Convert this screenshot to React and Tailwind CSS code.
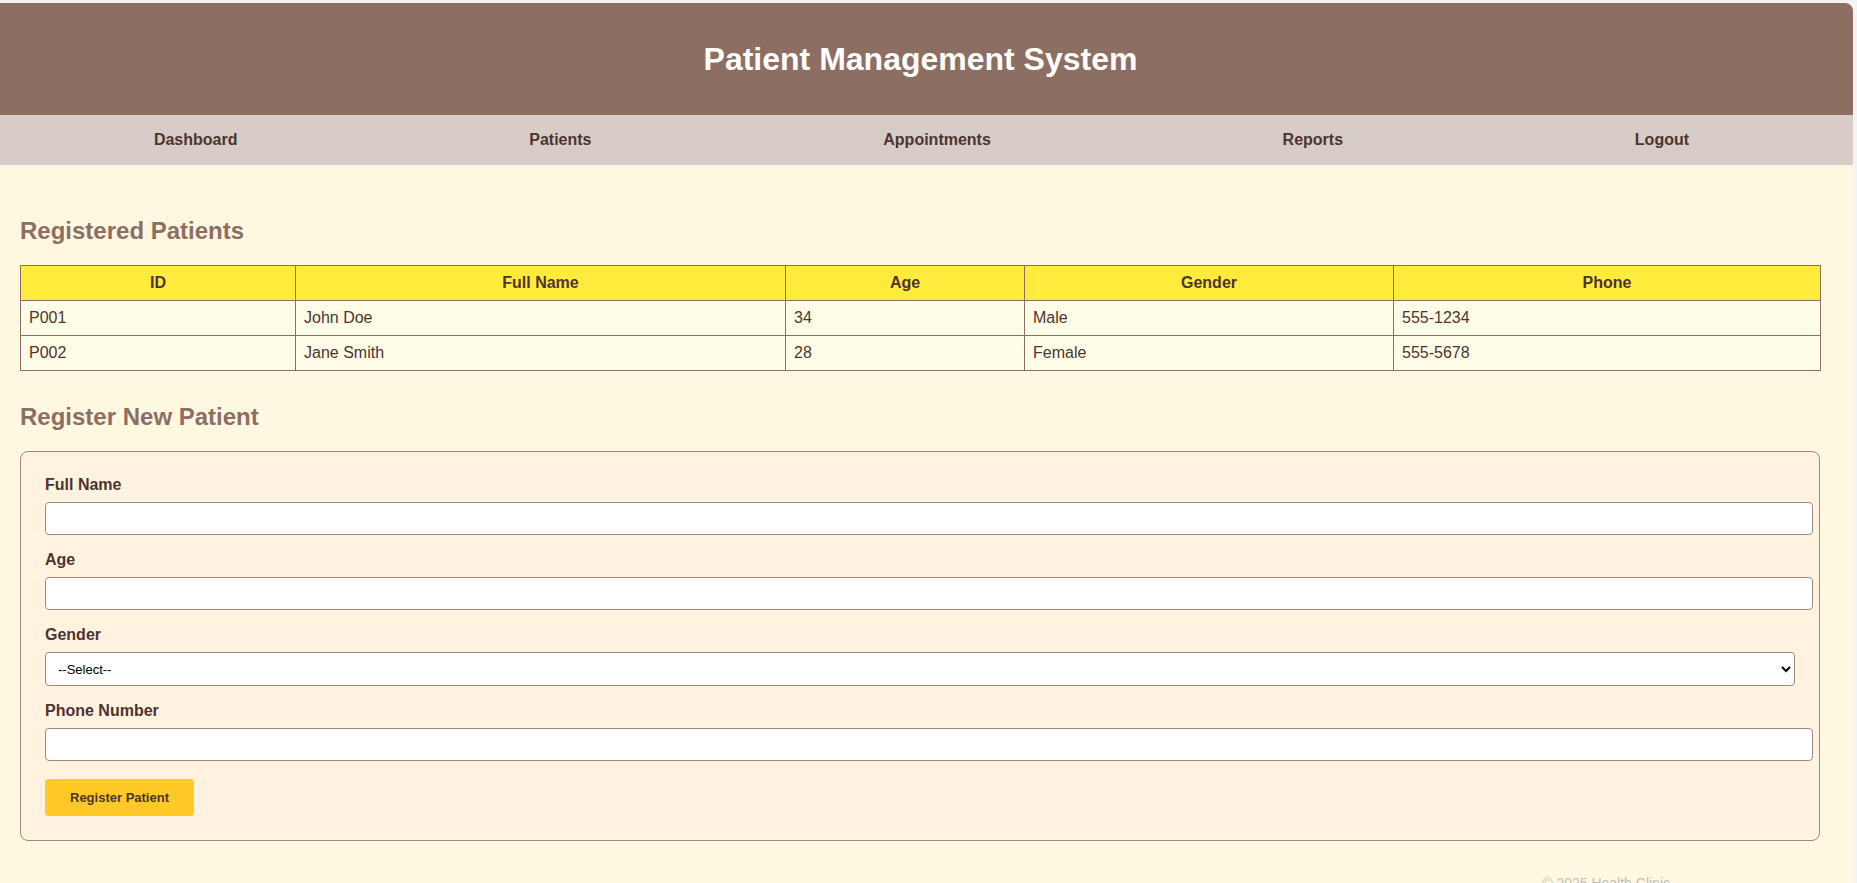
export default function App() {
  const patients = [
    { id: "P001", name: "John Doe", age: "34", gender: "Male", phone: "555-1234" },
    { id: "P002", name: "Jane Smith", age: "28", gender: "Female", phone: "555-5678" },
  ];
  const navItems = ["Dashboard", "Patients", "Appointments", "Reports", "Logout"];
  return (
    <div
      className="min-h-screen bg-[#f3f3f3] pt-[3px] pr-[4px]"
      style={{ fontFamily: '"Liberation Sans", Arial, sans-serif' }}
    >
      <div className="bg-[#fff8e1] rounded-tr-[8px] overflow-hidden h-[880px]">
        <header className="h-[112px] bg-[#8d6e63] flex items-center justify-center pr-[12px]">
          <h1 className="text-[32px] leading-[37px] font-bold text-white">Patient Management System</h1>
        </header>
        <nav className="h-[50px] bg-[#d7ccc8] flex items-center justify-around pl-[8px] pr-[18px]">
          {navItems.map((n) => (
            <a key={n} className="text-[16px] leading-[18px] font-bold text-[#4e342e] cursor-pointer">
              {n}
            </a>
          ))}
        </nav>
        <main className="pl-5 pr-[33px] pt-[52px]">
          <h2 className="text-[24px] leading-[28px] font-bold text-[#8d6e63]">Registered Patients</h2>
          <table className="mt-5 w-full table-fixed border-collapse border border-[#8d6e63] text-[16px] leading-[18px] text-[#4e342e]">
            <colgroup>
              <col className="w-[275px]" />
              <col className="w-[490px]" />
              <col className="w-[239px]" />
              <col className="w-[369px]" />
              <col className="w-[427px]" />
            </colgroup>
            <thead>
              <tr className="bg-[#ffeb3b]">
                {["ID", "Full Name", "Age", "Gender", "Phone"].map((h) => (
                  <th key={h} className="border border-[#8d6e63] px-2 py-[8px] font-bold text-center">
                    {h}
                  </th>
                ))}
              </tr>
            </thead>
            <tbody>
              {patients.map((p) => (
                <tr key={p.id} className="bg-[#fffde7]">
                  <td className="border border-[#8d6e63] px-2 py-[8px]">{p.id}</td>
                  <td className="border border-[#8d6e63] px-2 py-[8px]">{p.name}</td>
                  <td className="border border-[#8d6e63] px-2 py-[8px]">{p.age}</td>
                  <td className="border border-[#8d6e63] px-2 py-[8px]">{p.gender}</td>
                  <td className="border border-[#8d6e63] px-2 py-[8px]">{p.phone}</td>
                </tr>
              ))}
            </tbody>
          </table>
          <h2 className="mt-8 text-[24px] leading-[28px] font-bold text-[#8d6e63]">Register New Patient</h2>
          <form className="mt-5 border border-[#a1887f] rounded-[8px] bg-[#fff3e0] p-6">
            <label className="block text-[16px] leading-[18px] font-bold text-[#4e342e] mb-2">Full Name</label>
            <input className="block h-[33px] w-[calc(100%+18px)] border border-[#a1887f] rounded-[4px] bg-white mb-4 px-2 text-[13px]" />
            <label className="block text-[16px] leading-[18px] font-bold text-[#4e342e] mb-2">Age</label>
            <input className="block h-[33px] w-[calc(100%+18px)] border border-[#a1887f] rounded-[4px] bg-white mb-4 px-2 text-[13px]" />
            <label className="block text-[16px] leading-[18px] font-bold text-[#4e342e] mb-2">Gender</label>
            <select className="block h-[34px] w-full border border-[#a1887f] rounded-[4px] bg-white mb-4 pl-[8px] pr-[6px] text-[13px] text-black">
              <option>--Select--</option>
              <option>Male</option>
              <option>Female</option>
            </select>
            <label className="block text-[16px] leading-[18px] font-bold text-[#4e342e] mb-2">Phone Number</label>
            <input className="block h-[33px] w-[calc(100%+18px)] border border-[#a1887f] rounded-[4px] bg-white mb-4 px-2 text-[13px]" />
            <button
              type="button"
              className="mt-[2px] h-[37px] w-[149px] bg-[#ffca28] rounded-[4px] text-[13px] font-bold text-[#4e342e]"
            >
              Register Patient
            </button>
          </form>
          <div className="mt-[34px] flex justify-end pr-[150px]">
            <p className="text-[14px] leading-[16px] text-[#bdbdbd]">© 2025 Health Clinic</p>
          </div>
        </main>
      </div>
    </div>
  );
}
